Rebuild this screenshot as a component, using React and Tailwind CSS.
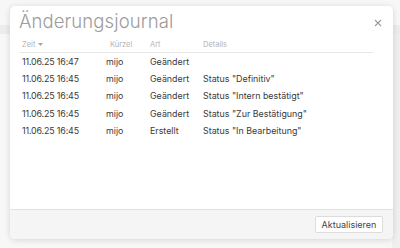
import React from "react";

const rows = [
  ["11.06.25 16:47", "mijo", "Geändert", ""],
  ["11.06.25 16:45", "mijo", "Geändert", 'Status "Definitiv"'],
  ["11.06.25 16:45", "mijo", "Geändert", 'Status "Intern bestätigt"'],
  ["11.06.25 16:45", "mijo", "Geändert", 'Status "Zur Bestätigung"'],
  ["11.06.25 16:45", "mijo", "Erstellt", 'Status "In Bearbeitung"'],
];

export default function App() {
  return (
    <div
      className="relative w-[400px] h-[248px] overflow-hidden bg-[#f7f7f7]"
      style={{ fontFamily: "Inter, 'Open Sans', sans-serif" }}
    >
      <div className="flex flex-col h-full">
        <div className="h-[25px]" />
        <div className="h-[9px] bg-[#ececec]" />
        <div className="flex-1 flex">
          <div className="flex-1" />
          <div className="w-[8px] bg-[#efefef]" />
        </div>
      </div>

      <div className="absolute left-[10px] top-[6px] w-[383px] h-[233px] bg-white rounded-[5px] shadow-[0_1px_6px_rgba(0,0,0,0.14)] flex flex-col overflow-hidden">
        <div className="flex items-start justify-between pl-[9px] pr-[10px] pt-[3px]">
          <div className="text-[18.5px] leading-[24px] font-light text-[#9c9c9c] tracking-[0.1px]">
            Änderungsjournal
          </div>
          <svg width="8" height="8" viewBox="0 0 8 8" className="mt-[10px] mr-[1px]">
            <path d="M1 1 L7 7 M7 1 L1 7" stroke="#9a9a9a" strokeWidth="1.1" />
          </svg>
        </div>

        <div className="ml-[10px] w-[353px] mt-[4px] flex-1">
          <div className="flex h-[16px] items-center border-b border-[#e6e6e6] text-[7.5px] text-[#b4b4b4]">
            <div className="w-[84px] pl-[2px] flex items-center gap-[3px]">
              Zeit
              <svg width="5" height="3" viewBox="0 0 5 3">
                <path d="M0 0 L5 0 L2.5 3 Z" fill="#a8a8a8" />
              </svg>
            </div>
            <div className="w-[44px] pl-[6px]">Kürzel</div>
            <div className="w-[53px] pl-[2px]">Art</div>
            <div className="flex-1 pl-[2px]">Details</div>
          </div>
          <div>
            {rows.map((r, i) => (
              <div key={i} className="flex h-[17.25px] items-center text-[8.9px] text-[#3a3a3a]">
                <div className="w-[84px] pl-[2px] tracking-[-0.15px]">{r[0]}</div>
                <div className="w-[44px] pl-[2px]">{r[1]}</div>
                <div className="w-[53px] pl-[2px]">{r[2]}</div>
                <div className="flex-1 pl-[2px]">{r[3]}</div>
              </div>
            ))}
          </div>
        </div>

        <div className="h-[30px] border-t border-[#e2e2e2] bg-[#f5f5f5] flex items-center justify-end pr-[10px]">
          <button className="h-[17px] w-[68px] bg-white border border-[#dcdcdc] rounded-[2px] text-[9px] text-[#444] flex items-center justify-center">
            Aktualisieren
          </button>
        </div>
      </div>
    </div>
  );
}
